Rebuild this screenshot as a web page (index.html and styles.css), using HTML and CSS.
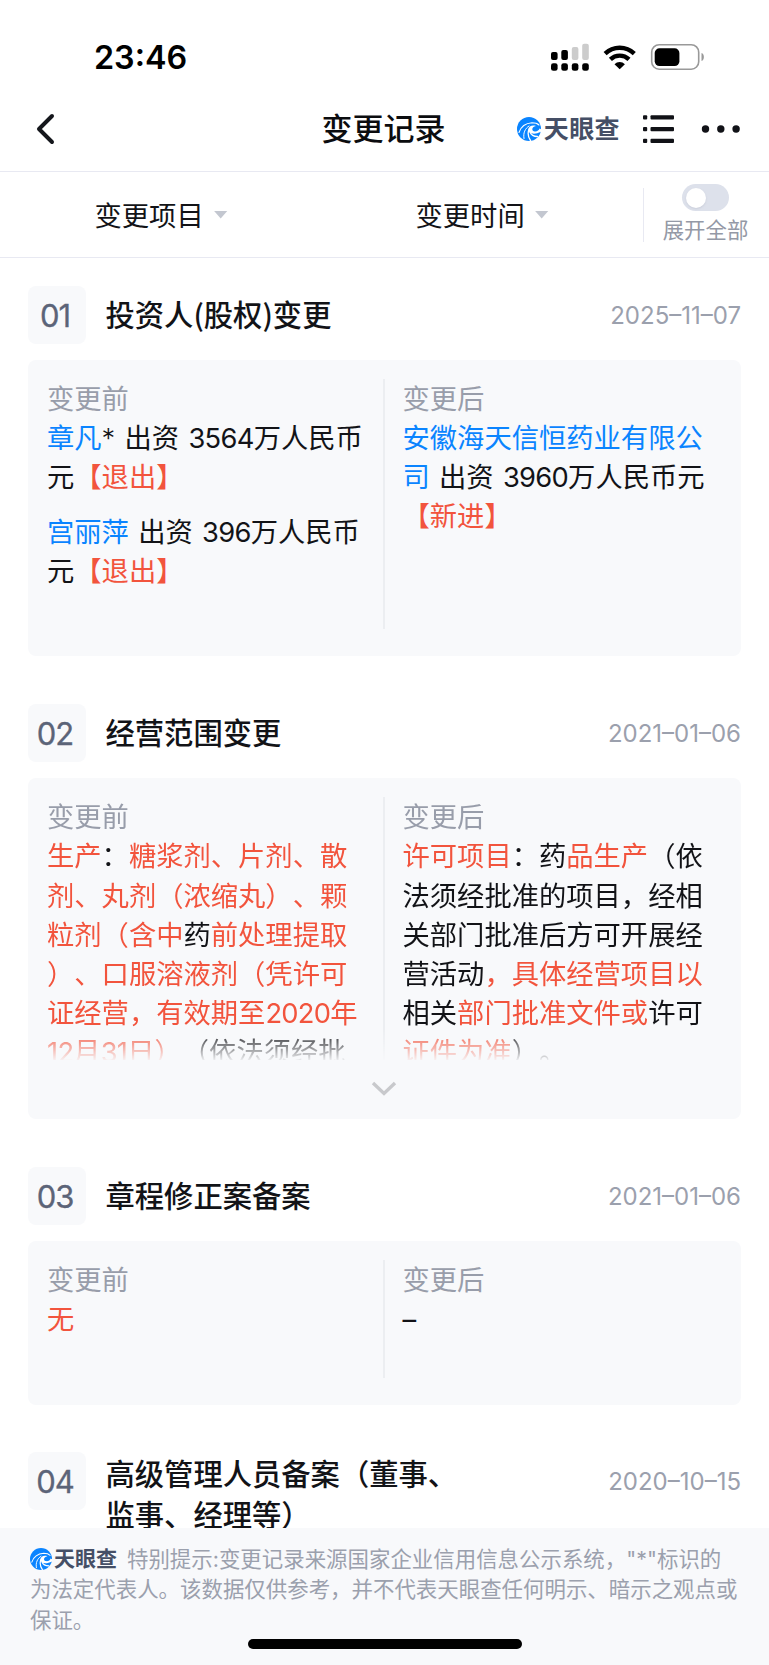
FILE: index.html
```html
<!DOCTYPE html>
<html lang="zh-CN">
<head>
<meta charset="utf-8">
<title>变更记录</title>
<link rel="stylesheet" href="styles.css">
</head>
<body>
<svg class="defs" width="0" height="0" aria-hidden="true">
  <symbol id="eye" viewBox="0 0 24 24">
    <circle cx="12" cy="12" r="12" fill="#0a84ff"/>
    <g fill="none" stroke="#fff" stroke-linecap="round">
      <path d="M2 15.500C4 9.500 9 6.200 15 5.800C18 5.800 20.500 6.500 22 8" stroke-width="1.100"/>
      <path d="M12 9C8 11.500 6 16 7 21.500" stroke-width="1"/>
      <path d="M12 12C10.500 16 11 20 13.500 23.500" stroke-width="1.300"/>
      <path d="M13 15C14 17.800 17 19.500 20.500 19.500" stroke-width="1.300"/>
    </g>
    <path d="M19 9C15.500 7.800 11.500 9 11.500 12.500C11.500 16.500 17 18.500 24.500 14.500V12.500L22.500 11.500C22 13.500 19.500 15 17 14.300C14.500 13.500 14.500 10 19 9Z" fill="#fff"/>
  </symbol>
</svg>
<div class="status">
  <time class="clock">23:46</time>
  <svg class="status-icons" width="156" height="30" viewBox="0 0 156 30">
    <g>
      <rect x="1" y="10" width="6.600" height="8" rx="2"/><rect x="11.300" y="8" width="6.600" height="10" rx="2"/>
      <rect x="21.800" y="5" width="6.600" height="13" rx="2" fill="#ccc"/><rect x="32.200" y="1.700" width="6.600" height="16.300" rx="2" fill="#ccc"/>
      <rect x="1" y="21.300" width="6.600" height="7.500" rx="2.300"/><rect x="11.300" y="21.300" width="6.600" height="7.500" rx="2.300"/>
      <rect x="21.800" y="21.300" width="6.600" height="7.500" rx="2.300"/><rect x="32.200" y="21.300" width="6.600" height="7.500" rx="2.300"/>
    </g>
    <g fill="none" stroke="#000" stroke-width="4.400">
      <path d="M55.100 11.700A21 21 0 0 1 84.300 11.700"/>
      <path d="M60.400 17.300A13.500 13.500 0 0 1 79 17.300"/>
    </g>
    <path d="M64.500 22.200A7.500 7.500 0 0 1 74.900 22.200L69.700 27.300Z"/>
    <rect x="101.700" y="2.700" width="47" height="24.500" rx="7.500" fill="none" stroke="#999" stroke-width="1.600"/>
    <rect x="104.700" y="6.300" width="24.700" height="17.800" rx="4.800"/>
    <path d="M151.500 11V19C154.700 18 154.700 12 151.500 11Z" fill="#999"/>
  </svg>
</div>
<header class="nav">
  <svg class="back" width="20" height="32" viewBox="0 0 20 32"><path d="M16 3L3 16L16 29" fill="none" stroke="#15171c" stroke-width="4" stroke-linecap="round" stroke-linejoin="round"/></svg>
  <h1 class="nav-title">变更记录</h1>
  <div class="nav-tools">
    <span class="brand"><svg class="brand-mark"><use href="#eye"/></svg><b class="brand-name">天眼查</b></span>
    <svg class="menu-icon" width="32" height="30" viewBox="0 0 32 30" fill="#111217">
      <rect x="0" y="1.200" width="4.200" height="4.200" rx="1"/><rect x="0" y="13" width="4.200" height="4.200" rx="1"/><rect x="0" y="24.800" width="4.200" height="4.200" rx="1"/>
      <rect x="7.500" y="1.200" width="23.500" height="4.200" rx="1"/><rect x="7.500" y="13" width="23.500" height="4.200" rx="1"/><rect x="7.500" y="24.800" width="23.500" height="4.200" rx="1"/>
    </svg>
    <svg class="more-icon" width="40" height="10" viewBox="0 0 40 10" fill="#111217"><circle cx="4.500" cy="5" r="3.700"/><circle cx="19.800" cy="5" r="3.700"/><circle cx="35.100" cy="5" r="3.700"/></svg>
  </div>
</header>
<div class="filters">
  <div class="filter"><span class="filter-text">变更项目</span><i class="caret"></i></div>
  <div class="filter"><span class="filter-text">变更时间</span><i class="caret"></i></div>
  <div class="expand"><span class="switch"><i class="knob"></i></span><span class="expand-text">展开全部</span></div>
</div>
<main class="list">
  <section class="record">
    <div class="head"><span class="index">01</span><h2 class="title">投资人(股权)变更</h2><time class="date">2025–11–07</time></div>
    <div class="card card-stake">
      <div class="col"><div class="label">变更前</div>
        <p><a>章凡</a><span class="star">*</span> 出资 <span class="num">3564</span>万人民币<br>元<em>【退出】</em></p>
        <p><a>宫丽萍</a> 出资 <span class="num">396</span>万人民币<br>元<em>【退出】</em></p></div>
      <div class="col"><div class="label">变更后</div>
        <p><a>安徽海天信恒药业有限公<br>司</a> 出资 <span class="num">3960</span>万人民币元<br><em>【新进】</em></p></div>
    </div>
  </section>
  <section class="record">
    <div class="head"><span class="index">02</span><h2 class="title">经营范围变更</h2><time class="date">2021–01–06</time></div>
    <div class="card card-scope">
      <div class="clip">
        <div class="col"><div class="label">变更前</div>
          <p><em>生产</em>：<em>糖浆剂、片剂、散<br>剂、丸剂（浓缩丸）、颗<br>粒剂（含中</em>药<em>前处理提取<br>）、口服溶液剂（凭许可<br>证经营，有效期至<span class="num">2020</span>年<br><span class="num">12</span>月<span class="num">31</span>日）</em>（依法须经批</p></div>
        <div class="col"><div class="label">变更后</div>
          <p><em>许可项目</em>：药<em>品生产</em>（依<br>法须经批准的项目，经相<br>关部门批准后方可开展经<br>营活动<em>，具体经营项目以</em><br>相关<em>部门批准文件或</em>许可<br><em>证件为准</em>）。</p></div>
      </div>
      <svg class="down" width="26" height="16" viewBox="0 0 26 16"><path d="M2 2L13 12.500L24 2" fill="none" stroke="#c8c9cc" stroke-width="3.400"/></svg>
    </div>
  </section>
  <section class="record">
    <div class="head"><span class="index">03</span><h2 class="title">章程修正案备案</h2><time class="date">2021–01–06</time></div>
    <div class="card card-short">
      <div class="col"><div class="label">变更前</div><p><em>无</em></p></div>
      <div class="col"><div class="label">变更后</div><p>–</p></div>
    </div>
  </section>
  <section class="record">
    <div class="head"><span class="index">04</span><h2 class="title title-long">高级管理人员备案（董事、<br>监事、经理等）</h2><time class="date">2020–10–15</time></div>
  </section>
</main>
<footer class="notice">
  <p class="notice-text"><span class="brand brand-small"><svg class="brand-mark"><use href="#eye"/></svg><b class="brand-name">天眼查</b></span>特别提示:变更记录来源国家企业信用信息公示系统，"*"标识的<br>为法定代表人。该数据仅供参考，并不代表天眼查任何明示、暗示之观点或<br>保证。</p>
  <div class="home-bar"></div>
</footer>
</body>
</html>
```
FILE: styles.css
```css
* { box-sizing: border-box; margin: 0; padding: 0; }
body {
  width: 769px; height: 1665px; overflow: hidden;
  display: flex; flex-direction: column;
  background: #fff; color: #121317;
  font-family: Inter, "Noto Sans CJK SC", sans-serif;
  text-spacing-trim: space-all;
  white-space: nowrap;
}
.defs { position: absolute; }
em, i { font-style: normal; }
svg { display: block; flex: none; }

.status { height: 88px; flex: none; display: flex; justify-content: space-between; padding: 42px 64px 0 94px; }
.clock { font-size: 32.300px; font-weight: 600; line-height: 32px; color: #000; }
.status-icons { margin-right: -1px; }

.nav { height: 84px; flex: none; display: grid; grid-template-columns: 1fr 124px 1fr; align-items: center; padding: 0 28px 2px 36px; border-bottom: 1px solid #e8e9f2; }
.nav-title { font-size: 31px; font-weight: 500; line-height: 44px; color: #0b0c0f; margin-left: -5px; }
.nav-tools { display: flex; align-items: center; justify-content: flex-end; }
.brand { display: inline-flex; align-items: center; color: #454f66; }
.brand-mark { width: 24px; height: 24px; }
.brand-name { font-size: 25px; font-weight: 700; line-height: 28px; margin-left: 3px; letter-spacing: .4px; }
.menu-icon { margin-left: 23px; }
.more-icon { margin-left: 26px; }

.filters { height: 86px; flex: none; display: flex; align-items: center; border-bottom: 1px solid #e8e9f2; }
.filter { width: 321px; height: 40px; display: flex; align-items: center; padding-left: 94.500px; gap: 10px; font-size: 27.3px; line-height: 40px; }
.filter-text { padding-top: 4px; }
.caret { width: 14px; height: 8px; background: #c3c7d0; clip-path: polygon(0 0, 100% 0, 50% 100%); }
.expand { height: 54px; flex: 1; margin-left: 1px; border-left: 1px solid #e8e9f2; display: flex; flex-direction: column; align-items: center; justify-content: center; padding-right: 2px; }
.switch { width: 47px; height: 27px; padding: 3.5px; border-radius: 14px; background: #dde1eb; }
.knob { display: block; width: 20px; height: 20px; border-radius: 50%; background: #fff; box-shadow: 0 1px 2px #aab0c060; }
.expand-text { font-size: 21.4px; line-height: 30px; margin-top: 4px; color: #9499a6; }

.list { flex: 1; min-height: 0; overflow: hidden; padding: 27.500px 28px 0 27.500px; }
.record { margin-bottom: 47.400px; }
.head { display: flex; align-items: flex-start; height: 58.200px; }
.index { width: 58.500px; height: 58px; border-radius: 8px; background: #f8f9fb; color: #5c6478; font-size: 31px; line-height: 59px; text-align: center; letter-spacing: -1px; padding-right: 3.500px; -webkit-text-stroke: .3px #5c6478; }
.title { flex: 1; margin-left: 19.500px; padding-top: 7.600px; font-family: "Noto Sans CJK SC", sans-serif; font-size: 29.300px; line-height: 41px; font-weight: 500; }
.title-long { padding-top: 0; margin-top: -.600px; }
.date { font-size: 24px; line-height: 60px; color: #9ba0ad; }

.card { position: relative; margin-top: 16.200px; border-radius: 8px; background: #f8f9fb; display: grid; grid-template-columns: 357.500px 1fr; padding-top: 19px; font-size: 27.300px; line-height: 39.100px; word-spacing: 1.600px; }
.card-stake { height: 296.500px; padding-bottom: 27px; }
.card-short { height: 163.900px; padding-bottom: 27px; }
.card-scope { height: 341.200px; display: block; }
.clip { height: 263px; overflow: hidden; display: grid; grid-template-columns: 357.500px 1fr; -webkit-mask-image: linear-gradient(#000 232px, transparent 265px); mask-image: linear-gradient(#000 232px, transparent 265px); }
.col { padding: 1.200px 0 0 19.500px; }
.col + .col { padding-left: 17.500px; }
.col:first-child { border-right: 2px solid #eceef1; }
.label { color: #989daa; }
.col p + p { margin-top: 15.200px; }
.col a { color: #0a84ff; }
.col em { color: #f2543d; }
.star { font-weight: 300; }
.num { letter-spacing: -.700px; }
.down { margin: 20.500px auto 0; }

.notice { height: 137px; flex: none; background: #f8f9fb; padding: 16px 30px 0; }
.notice-text { font-size: 21.450px; line-height: 30.400px; color: #9ba0ad; }
.brand-small { height: 30px; vertical-align: top; margin-right: 10px; }
.brand-small .brand-mark { width: 22px; height: 22px; }
.brand-small .brand-name { font-size: 21px; margin-left: 2px; letter-spacing: 0; }
.home-bar { width: 274px; height: 10px; border-radius: 5px; background: #000; margin: 4px auto 0; }
```
